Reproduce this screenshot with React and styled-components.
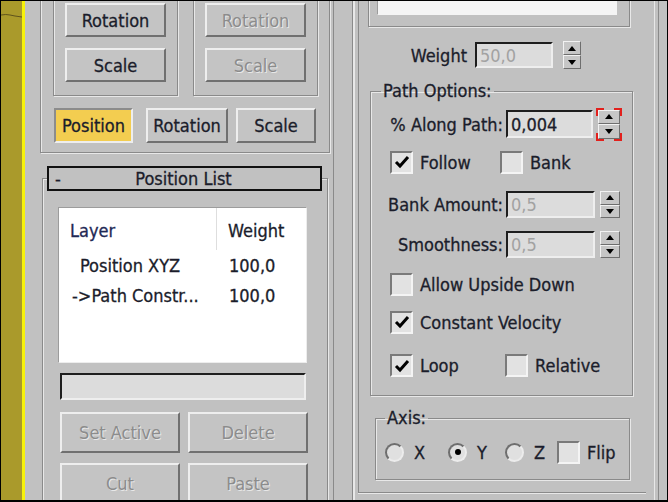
import React from 'react';
import styled, { createGlobalStyle } from 'styled-components';

const GRAY = '#c1c1c1';
const DARK = '#8a8a8a';
const LIGHT = '#e8e8e8';
const TEXT = '#1b1d2b';
const DIM = '#8c8c8c';

const GlobalStyle = createGlobalStyle`
  html, body { margin: 0; padding: 0; background: #000; }
  body {
    font-family: "DejaVu Sans Condensed", "DejaVu Sans", sans-serif;
    font-size: 18px;
    color: ${TEXT};
    -webkit-text-stroke: 0.3px currentColor;
  }
  * { box-sizing: border-box; }
`;

const Screen = styled.div`
  width: 668px;
  height: 502px;
  border: 1px solid #000;
  border-bottom-width: 2px;
  display: flex;
  overflow: hidden;
  background: ${GRAY};
`;

const Viewport = styled.div`
  width: 24px;
  flex: none;
  background: #aa9a2b;
  border-right: 3px solid #f7f20a;
`;

const LeftPanel = styled.div`
  width: 309px;
  flex: none;
  padding-left: 15px;
  border-right: 1px solid ${DARK};
  display: flex;
  flex-direction: column;
`;

const RightPanel = styled.div`
  flex: 1;
  padding: 0 8px 0 18px;
  display: flex;
`;

const Frame = styled.div`
  border: 1px solid ${DARK};
  box-shadow: inset 1px 1px 0 ${LIGHT}, 1px 1px 0 ${LIGHT};
`;

const TopFrame = styled(Frame)`
  margin-top: -22px;
  width: 290px;
  padding: 11px 0 9px 12px;
`;

const GroupRow = styled.div`
  display: flex;
  gap: 15px;
`;

const GroupBox = styled(Frame)`
  width: 125px;
  padding: 11px 11px 13px;
  display: flex;
  flex-direction: column;
  gap: 11px;
`;

const Button = styled.button`
  font: inherit;
  flex: none;
  width: ${p => p.$w}px;
  height: ${p => p.$h || 34}px;
  padding: 0;
  color: ${p => (p.$dim ? DIM : TEXT)};
  -webkit-text-stroke: ${p => (p.$dim ? '0' : '0.3px currentColor')};
  text-shadow: ${p => (p.$dim ? `1px 1px 0 ${LIGHT}` : 'none')};
  background: ${p => (p.$active ? '#f3cd50' : '#c4c4c4')};
  border: 2px solid;
  border-color: ${p =>
    p.$active ? '#8c8c8c #eeeeee #eeeeee #8c8c8c' : '#eeeeee #707070 #707070 #eeeeee'};
  cursor: default;
`;

const ButtonRow = styled.div`
  display: flex;
  gap: ${p => p.$gap || 8}px;
  margin-top: ${p => p.$mt || 0}px;
  margin-left: ${p => p.$ml || 0}px;
`;

const RolloutHeader = styled.div`
  position: relative;
  z-index: 1;
  margin: 13px 0 0 7px;
  width: 275px;
  height: 28px;
  border: 2px solid #111;
  background: ${GRAY};
  display: flex;
  align-items: center;
`;

const Collapse = styled.span`
  width: 0;
  padding-left: 6px;
`;

const HeaderTitle = styled.span`
  flex: 1;
  text-align: center;
  padding-right: 8px;
`;

const ListFrame = styled(Frame)`
  margin: -13px 0 0 2px;
  width: 286px;
  flex: 1;
  padding: 28px 0 0 15px;
  border-bottom: none;
`;

const ListBox = styled.div`
  width: 249px;
  height: 156px;
  background: #fff;
  border: 1px solid;
  border-color: #9c9c9c #ededed #ededed #9c9c9c;
`;

const ListHead = styled.div`
  display: flex;
  height: 42px;
  align-items: center;
`;

const HeadCell = styled.div`
  width: ${p => p.$w}px;
  height: 100%;
  padding: 3px 0 0 11px;
  display: flex;
  align-items: center;
  color: ${p => p.$color || TEXT};
  border-right: ${p => (p.$divider ? '1px solid #dedede' : 'none')};
`;

const ListRow = styled.div`
  display: flex;
  height: 30px;
  align-items: center;
`;

const Cell = styled.div`
  width: ${p => p.$w}px;
  padding-left: ${p => p.$pl}px;
  white-space: nowrap;
`;

const NameField = styled.div`
  margin: 10px 0 0 2px;
  width: 246px;
  height: 27px;
  background: #dcdcdc;
  border: 2px solid;
  border-color: #1e1e1e #eeeeee #eeeeee #1e1e1e;
`;

/* right side */

const OuterFrame = styled.div`
  width: 307px;
  border-left: 1px solid ${DARK};
  border-right: 1px solid ${DARK};
  box-shadow: inset 2px 0 0 ${LIGHT}, inset -3px 0 0 ${GRAY}, inset -4px 0 0 ${LIGHT};
  padding: 0 12px 0 5px;
`;

const InnerFrame = styled.div`
  border-left: 1px solid ${DARK};
  border-bottom: 1px solid ${DARK};
  box-shadow: 0 1px 0 ${LIGHT};
  padding-bottom: 12px;
  display: flex;
  flex-direction: column;
`;

const TopGroup = styled(Frame)`
  margin: -50px 0 0 9px;
  width: 262px;
  padding: 8px 12px 11px 8px;
`;

const WhiteList = styled.div`
  height: 55px;
  background: #f4f4f4;
  border: 1px solid;
  border-color: #9c9c9c #f4f4f4 #f4f4f4 #9c9c9c;
`;

const Row = styled.div`
  display: flex;
  align-items: center;
  height: ${p => p.$h}px;
  margin-top: ${p => p.$mt || 0}px;
  margin-left: ${p => p.$ml || 0}px;
`;

const Label = styled.span`
  flex: none;
  width: ${p => p.$w}px;
  text-align: right;
  white-space: nowrap;
`;

const Input = styled.div`
  flex: none;
  width: ${p => p.$w}px;
  height: ${p => p.$h}px;
  margin-left: ${p => p.$ml}px;
  padding-left: 3px;
  display: flex;
  align-items: center;
  background: #dcdcdc;
  border: 2px solid;
  border-color: #1e1e1e #eeeeee #eeeeee #1e1e1e;
  color: ${p => (p.$dim ? '#a2a2a2' : TEXT)};
  -webkit-text-stroke: ${p => (p.$dim ? '0' : '0.3px currentColor')};
`;

const Spinner = styled.div`
  position: relative;
  flex: none;
  width: ${p => p.$w}px;
  height: ${p => p.$h}px;
  margin-left: ${p => p.$ml}px;
  display: flex;
  flex-direction: column;
`;

const SpinHalf = styled.div`
  flex: 1;
  background: #c6c6c6;
  border: 1px solid;
  border-color: #f2f2f2 #6e6e6e #6e6e6e #f2f2f2;
  display: flex;
  align-items: center;
  justify-content: center;
  &::after {
    content: '';
    border-left: 4px solid transparent;
    border-right: 4px solid transparent;
    ${p => (p.$down ? 'border-top: 5px solid #000;' : 'border-bottom: 5px solid #000;')}
  }
`;

const FocusMarks = styled.svg`
  position: absolute;
  left: -2px;
  top: -2px;
`;

const GroupSet = styled.fieldset`
  margin: ${p => p.$mt}px 0 0 ${p => p.$ml}px;
  width: ${p => p.$w}px;
  padding: 0 8px ${p => p.$pb}px ${p => p.$pl}px;
  border: 1px solid ${DARK};
  box-shadow: inset 1px 1px 0 ${LIGHT}, 1px 1px 0 ${LIGHT};
  min-inline-size: 0;
`;

const Legend = styled.legend`
  padding: 0 2px;
  line-height: 22px;
`;

const CheckItem = styled.label`
  display: flex;
  align-items: center;
  width: ${p => (p.$w ? `${p.$w}px` : 'auto')};
  flex: none;
  gap: 7px;
  white-space: nowrap;
`;

const Box = styled.span`
  width: 23px;
  height: 23px;
  flex: none;
  background: #e2e2e2;
  border: 2px solid;
  border-color: #7a7a7a #f4f4f4 #f4f4f4 #7a7a7a;
  display: flex;
  align-items: center;
  justify-content: center;
`;

const RadioItem = styled.label`
  display: flex;
  align-items: center;
  gap: 10px;
  width: ${p => p.$w}px;
  flex: none;
`;

const RadioDot = styled.span`
  width: 19px;
  height: 19px;
  flex: none;
  border-radius: 50%;
  background: #e0e0e0;
  border: 2px solid;
  border-color: #6e6e6e #ececec #ececec #6e6e6e;
  display: flex;
  align-items: center;
  justify-content: center;
  &::after {
    content: '';
    width: 6px;
    height: 6px;
    border-radius: 50%;
    background: ${p => (p.$on ? '#000' : 'transparent')};
  }
`;

const Check = ({ on }) => (
  <Box>
    {on && (
      <svg width="16" height="14" viewBox="0 0 16 14">
        <path d="M2 7 L6 11 L14 2" fill="none" stroke="#000" strokeWidth="3" />
      </svg>
    )}
  </Box>
);

const Spin = ({ w, h, ml, focus }) => (
  <Spinner $w={w} $h={h} $ml={ml}>
    <SpinHalf />
    <SpinHalf $down />
    {focus && (
      <FocusMarks width={w + 4} height={h + 4}>
        <g fill="none" stroke="#e2201c" strokeWidth="2">
          <path d={`M1 8 V1 H8`} />
          <path d={`M${w - 4} 1 H${w + 3} V8`} />
          <path d={`M1 ${h - 4} V${h + 3} H8`} />
          <path d={`M${w - 4} ${h + 3} H${w + 3} V${h - 4}`} />
        </g>
      </FocusMarks>
    )}
  </Spinner>
);

const LeftSide = () => (
  <LeftPanel>
    <TopFrame>
      <GroupRow>
        <GroupBox>
          <Button $w={101}>Rotation</Button>
          <Button $w={101}>Scale</Button>
        </GroupBox>
        <GroupBox>
          <Button $w={101} $dim>Rotation</Button>
          <Button $w={101} $dim>Scale</Button>
        </GroupBox>
      </GroupRow>
      <ButtonRow $mt={12} $ml={1}>
        <Button $w={79} $h={35} $active>Position</Button>
        <Button $w={82} $h={35} style={{ marginLeft: 5 }}>Rotation</Button>
        <Button $w={80} $h={35}>Scale</Button>
      </ButtonRow>
    </TopFrame>

    <RolloutHeader>
      <Collapse>-</Collapse>
      <HeaderTitle>Position List</HeaderTitle>
    </RolloutHeader>
    <ListFrame>
      <ListBox>
        <ListHead>
          <HeadCell $w={158} $divider $color="#1f2955">Layer</HeadCell>
          <HeadCell $w={89}>Weight</HeadCell>
        </ListHead>
        <ListRow>
          <Cell $w={158} $pl={21}>Position XYZ</Cell>
          <Cell $w={89} $pl={12}>100,0</Cell>
        </ListRow>
        <ListRow>
          <Cell $w={158} $pl={13}>-&gt;Path Constr...</Cell>
          <Cell $w={89} $pl={12}>100,0</Cell>
        </ListRow>
      </ListBox>
      <NameField />
      <ButtonRow $mt={12} $ml={2}>
        <Button $w={120} $h={41} $dim>Set Active</Button>
        <Button $w={120} $h={41} $dim>Delete</Button>
      </ButtonRow>
      <ButtonRow $mt={10} $ml={2}>
        <Button $w={120} $h={41} $dim>Cut</Button>
        <Button $w={120} $h={41} $dim>Paste</Button>
      </ButtonRow>
    </ListFrame>
  </LeftPanel>
);

const RightSide = () => (
  <RightPanel>
    <OuterFrame>
      <InnerFrame>
        <TopGroup>
          <WhiteList />
        </TopGroup>

        <Row $h={28} $mt={14}>
          <Label $w={108}>Weight</Label>
          <Input $w={78} $h={26} $ml={8} $dim>50,0</Input>
          <Spin w={18} h={28} ml={10} />
        </Row>

        <GroupSet $mt={11} $ml={11} $w={263} $pl={10} $pb={18}>
          <Legend>Path Options:</Legend>
          <Row $h={30} $mt={7}>
            <Label $w={122}>% Along Path:</Label>
            <Input $w={87} $h={28} $ml={3}>0,004</Input>
            <Spin w={22} h={29} ml={5} focus />
          </Row>
          <Row $h={22} $mt={12} $ml={9}>
            <CheckItem $w={110}><Check on />Follow</CheckItem>
            <CheckItem><Check />Bank</CheckItem>
          </Row>
          <Row $h={27} $mt={18}>
            <Label $w={122}>Bank Amount:</Label>
            <Input $w={89} $h={27} $ml={3} $dim>0,5</Input>
            <Spin w={20} h={27} ml={5} />
          </Row>
          <Row $h={27} $mt={13}>
            <Label $w={122}>Smoothness:</Label>
            <Input $w={89} $h={27} $ml={3} $dim>0,5</Input>
            <Spin w={20} h={27} ml={5} />
          </Row>
          <Row $h={23} $mt={15} $ml={9}>
            <CheckItem><Check />Allow Upside Down</CheckItem>
          </Row>
          <Row $h={22} $mt={15} $ml={9}>
            <CheckItem><Check on />Constant Velocity</CheckItem>
          </Row>
          <Row $h={23} $mt={21} $ml={9}>
            <CheckItem $w={115}><Check on />Loop</CheckItem>
            <CheckItem><Check />Relative</CheckItem>
          </Row>
        </GroupSet>

        <GroupSet $mt={11} $ml={16} $w={255} $pl={9} $pb={16}>
          <Legend>Axis:</Legend>
          <Row $h={22} $mt={12}>
            <RadioItem $w={63}><RadioDot />X</RadioItem>
            <RadioItem $w={57}><RadioDot $on />Y</RadioItem>
            <RadioItem $w={52}><RadioDot />Z</RadioItem>
            <CheckItem><Check />Flip</CheckItem>
          </Row>
        </GroupSet>
      </InnerFrame>
    </OuterFrame>
  </RightPanel>
);

export default function App() {
  return (
    <>
      <GlobalStyle />
      <Screen>
        <Viewport>
          <svg width="21" height="30" viewBox="0 0 21 30">
            <path d="M0 14 Q5 13 9 14 T21 16" fill="none" stroke="#5f531c" strokeWidth="1" />
          </svg>
        </Viewport>
        <LeftSide />
        <RightSide />
      </Screen>
    </>
  );
}
